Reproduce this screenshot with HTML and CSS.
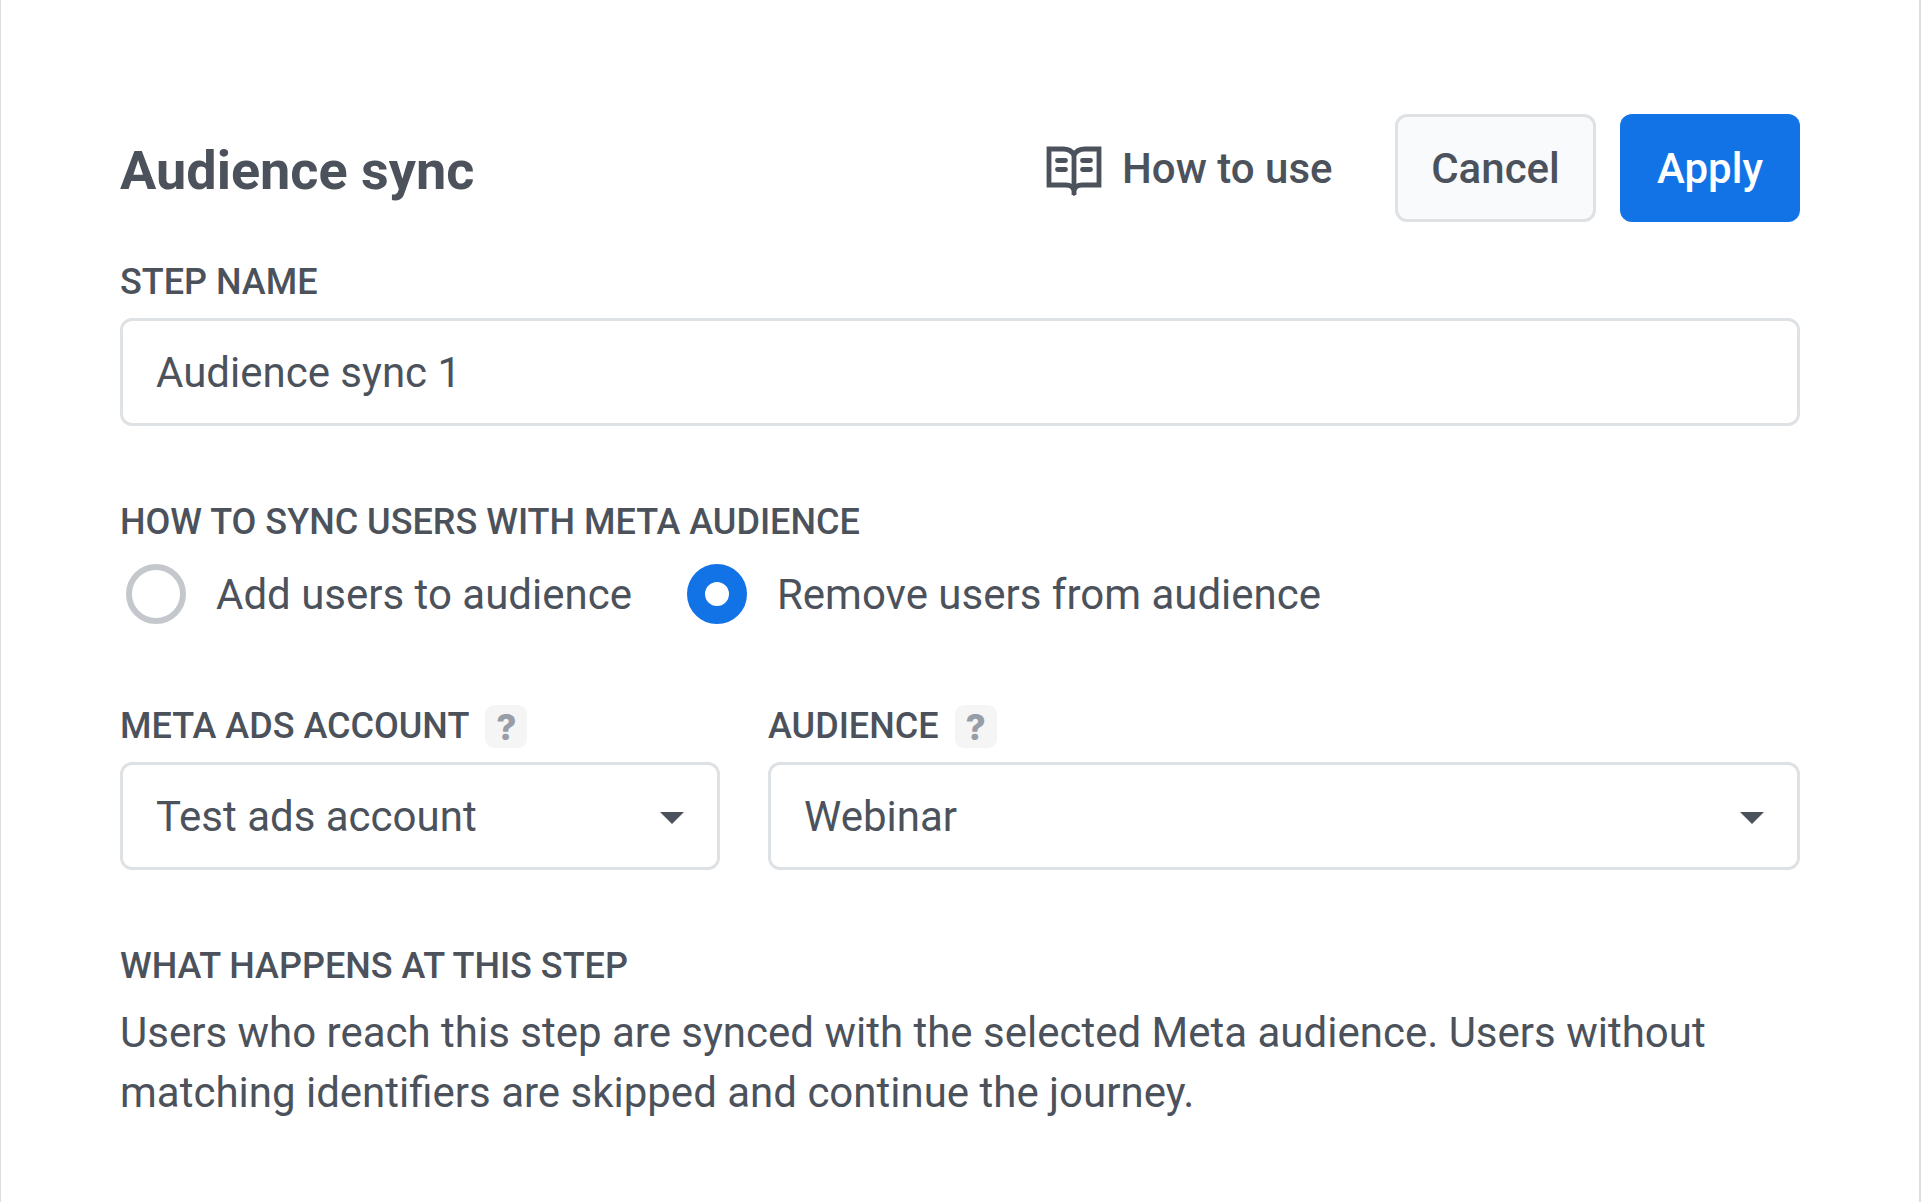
FILE: index.html
```html
<!DOCTYPE html>
<html lang="en">
<head>
<meta charset="utf-8">
<title>Audience sync</title>
<link rel="stylesheet" href="styles.css">
</head>
<body>
<main class="panel">
  <header class="header">
    <h1 class="title">Audience sync</h1>
    <a class="guide">
      <svg class="guide-icon" viewBox="0 0 56 50" fill="none" stroke="currentColor" stroke-width="4.800" aria-hidden="true">
        <path d="M28 9C26 5 22.500 3 17 3H3V39H20C24.500 39 27 41 28 44C29 41 31.500 39 36 39H53V3H39C33.500 3 30 5 28 9Z"/>
        <path d="M28 8V49"/>
        <path d="M11.500 14.500H19.500M11.500 23.500H19.500M36.500 14.500H44.500M36.500 23.500H44.500" stroke-linecap="round"/>
      </svg>
      <span class="guide-text">How to use</span>
    </a>
    <button class="button button-cancel">Cancel</button>
    <button class="button button-apply">Apply</button>
  </header>

  <section class="field field-name">
    <div class="label">STEP NAME</div>
    <div class="control">Audience sync 1</div>
  </section>

  <section class="field field-mode">
    <div class="label">HOW TO SYNC USERS WITH META AUDIENCE</div>
    <div class="radios">
      <label class="option"><span class="radio"></span><span class="option-text">Add users to audience</span></label>
      <label class="option"><span class="radio radio-checked"></span><span class="option-text">Remove users from audience</span></label>
    </div>
  </section>

  <div class="row">
    <section class="field">
      <div class="label">META ADS ACCOUNT<span class="help">?</span></div>
      <div class="control">Test ads account<svg class="caret" viewBox="0 0 24 12" aria-hidden="true"><path d="M0 0H24L12 12Z" fill="currentColor"/></svg></div>
    </section>
    <section class="field">
      <div class="label">AUDIENCE<span class="help">?</span></div>
      <div class="control">Webinar<svg class="caret" viewBox="0 0 24 12" aria-hidden="true"><path d="M0 0H24L12 12Z" fill="currentColor"/></svg></div>
    </section>
  </div>

  <section class="field field-info">
    <div class="label">WHAT HAPPENS AT THIS STEP</div>
    <p class="text">Users who reach this step are synced with the selected Meta audience. Users without matching identifiers are skipped and continue the journey.</p>
  </section>
</main>
</body>
</html>
```
FILE: styles.css
```css
* { box-sizing: border-box; }
body { margin: 0; background: #fff; color: #4c525b; font: 400 42px/60px Roboto, sans-serif; }
.panel { width: 1921px; height: 1202px; padding: 114px 119px 0 119px; border: solid #dcdde0; border-width: 0 2px 0 1px; overflow: hidden; }
.header { display: flex; align-items: center; height: 108px; }
.title { margin: 5px auto 0 0; font-size: 54px; font-weight: 700; line-height: 64px; }
.guide { display: flex; align-items: center; gap: 20px; margin-right: 62.5px; font-weight: 500; }
.guide-icon { width: 56px; height: 50px; margin-top: 5px; }
.guide-text, .option-text { padding-top: 2px; }
.button { height: 108px; padding: 2px 0 0; border: 0; border-radius: 12px; font: inherit; font-weight: 500; color: inherit; }
.button-cancel { width: 201px; margin-right: 24px; border: 3px solid #dfe2e5; background: #f8fafc; }
.button-apply { width: 180px; background: #1273e6; color: #fff; }
.field { display: flex; flex-direction: column; }
.field-name { margin-top: 33px; gap: 9px; }
.field-mode { margin-top: 69px; gap: 14px; }
.field-info { margin-top: 69px; gap: 10px; }
.label { display: flex; align-items: center; gap: 16px; height: 54px; font-size: 36px; font-weight: 500; line-height: 54px; }
.control { display: flex; align-items: center; justify-content: space-between; height: 108px; padding: 2px 33px 0; border: 3px solid #dfe2e5; border-radius: 12px; background: #fff; }
.radios { display: flex; gap: 55px; height: 62px; padding-left: 6px; }
.option { display: flex; align-items: center; gap: 30px; }
.radio { width: 60px; height: 60px; border: 6px solid #c4c8cc; border-radius: 50%; }
.radio-checked { border: 18px solid #1273e6; }
.row { display: grid; grid-template-columns: 600px 1fr; gap: 48px; margin-top: 74px; }
.row .field { gap: 9px; }
.help { width: 42px; height: 43px; border-radius: 9px; background: #f5f5f6; color: #989ea8; font-family: Inter, sans-serif; font-size: 35px; font-weight: 800; line-height: 44px; text-align: center; }
.caret { width: 24px; height: 12px; margin-top: 2px; }
.text { margin: 0; }
```
